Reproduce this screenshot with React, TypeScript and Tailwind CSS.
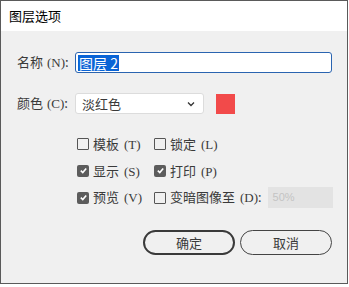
import React from "react";

const cjk = { fontFamily: '"Noto Sans CJK SC", "Noto Sans", sans-serif' };
const latin = { fontFamily: '"Liberation Serif", "Noto Sans CJK SC", serif' };

function Label({ zh, key1 }: { zh: string; key1: string }) {
  return (
    <span className="whitespace-nowrap text-[13px] text-[#3a3a3a]" style={cjk}>
      {zh}
      <span style={latin} className="ml-[5px]">
        ({key1})
      </span>
    </span>
  );
}

function Check({ checked, zh, k }: { checked?: boolean; zh: string; k: string }) {
  return (
    <div className="flex items-center gap-[4px]">
      {checked ? (
        <span className="flex h-[12px] w-[12px] items-center justify-center rounded-[2px] bg-[#5c5c5c]">
          <svg width="9" height="9" viewBox="0 0 10 10">
            <path d="M2 5.2 L4.2 7.3 L8 2.8" fill="none" stroke="#fff" strokeWidth="1.8" />
          </svg>
        </span>
      ) : (
        <span className="h-[12px] w-[12px] rounded-[1px] border border-[#555] bg-[#f0f0f0]" />
      )}
      <Label zh={zh} key1={k} />
    </div>
  );
}

export default function App() {
  return (
    <div className="h-[287px] w-[349px] bg-white">
      <div className="flex h-[284px] w-[348px] flex-col border border-[#5a5a5a]">
        <div className="flex h-[30px] items-center bg-white pl-[8px] text-[13px] text-black" style={cjk}>
          图层选项
        </div>
        <div className="flex-1 bg-[#f0f0f0] pl-[16px] pr-[15px]">
          <div className="mt-[21px] flex items-center">
            <span className="w-[58px] shrink-0 text-[13px] text-[#3a3a3a]" style={cjk}>
              名称<span style={latin} className="ml-[4px]">(N)</span>:
            </span>
            <div className="flex h-[21px] flex-1 items-center rounded-[3px] border border-[#2a64b0] bg-white pl-[2px]">
              <span className="bg-[#0a64d6] px-[1px] text-[14px] leading-[16px] text-white" style={cjk}>
                图层 2
              </span>
            </div>
          </div>
          <div className="mt-[20px] flex items-center">
            <span className="w-[58px] shrink-0 text-[13px] text-[#3a3a3a]" style={cjk}>
              颜色<span style={latin} className="ml-[4px]">(C)</span>:
            </span>
            <div className="flex h-[21px] w-[129px] items-center justify-between rounded-[3px] border border-[#dcdcdc] bg-white pl-[6px] pr-[8px]">
              <span className="text-[13px] text-[#3a3a3a]" style={cjk}>
                淡红色
              </span>
              <svg width="8" height="6" viewBox="0 0 8 6">
                <path d="M1 1.5 L4 4.5 L7 1.5" fill="none" stroke="#333" strokeWidth="1.3" />
              </svg>
            </div>
            <span className="ml-[12px] h-[20px] w-[19px] bg-[#f24a4a]" />
          </div>
          <div className="ml-[60px] mt-[20px] grid grid-cols-[77px_auto] gap-y-[6px]">
            <Check zh="模板" k="T" />
            <Check zh="锁定" k="L" />
            <Check checked zh="显示" k="S" />
            <Check checked zh="打印" k="P" />
            <Check checked zh="预览" k="V" />
            <div className="flex items-center">
              <Check zh="变暗图像至" k="D" />
              <span className="text-[13px] text-[#3a3a3a]">:</span>
              <div className="ml-[6px] flex h-[21px] w-[65px] items-center bg-[#e3e3e3] pl-[5px] text-[11px] text-[#c4c4c4]" style={{ fontFamily: '"Liberation Sans", sans-serif' }}>
                50%
              </div>
            </div>
          </div>
          <div className="mt-[22px] flex justify-end gap-[5px]">
            <button className="h-[25px] w-[92px] rounded-full border-2 border-[#3a3a3a] text-[13px] text-[#3a3a3a]" style={cjk}>
              确定
            </button>
            <button className="h-[25px] w-[92px] rounded-full border border-[#444] text-[13px] text-[#3a3a3a]" style={cjk}>
              取消
            </button>
          </div>
        </div>
      </div>
    </div>
  );
}
